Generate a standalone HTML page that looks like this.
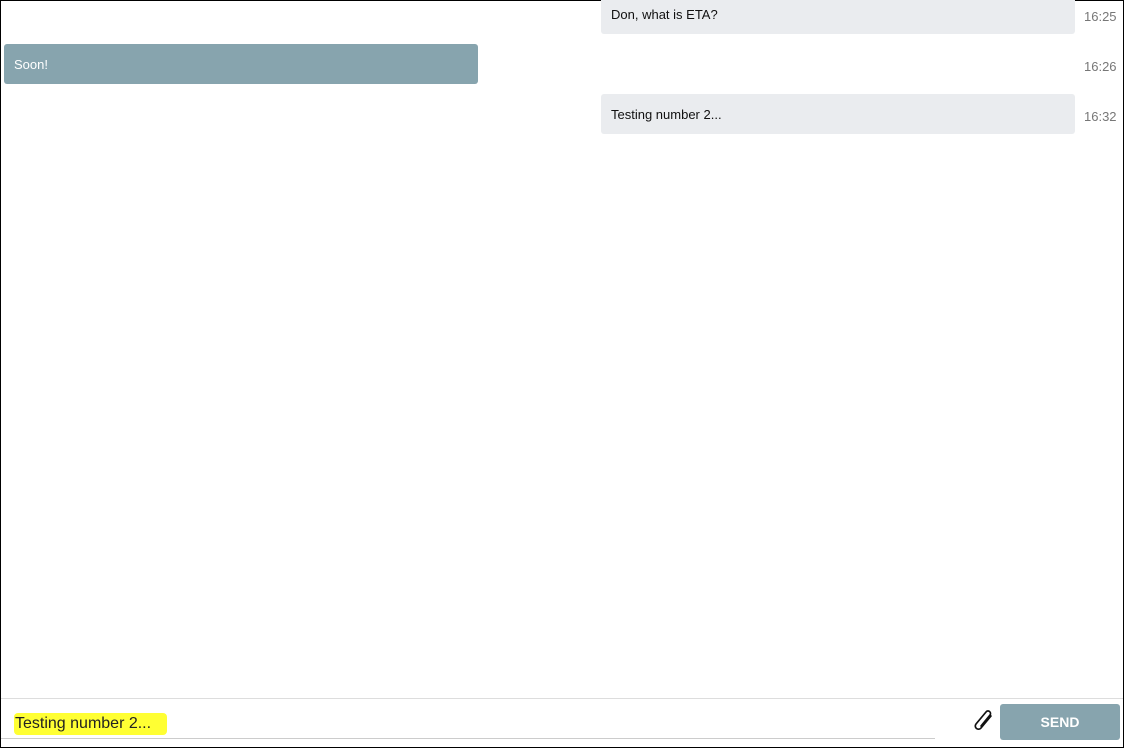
<!DOCTYPE html>
<html><head><style>
body{margin:0;width:1124px;height:748px;overflow:hidden;font-family:"Liberation Sans",Arial,sans-serif;background:#fff}
.frame{position:absolute;left:0;top:0;width:1122px;height:746px;border:1px solid #000}
.b{position:absolute;border-radius:3px;font-size:13px;padding-left:10px;box-sizing:border-box;line-height:41px}
.r{left:601px;width:474px;background:#eaecef;color:#111}
.l{left:4px;width:474px;background:#87a4ae;color:#fff}
.t{position:absolute;left:1084px;font-size:13px;color:#777}
</style></head><body>
<div class="frame"></div>
<div class="b r" style="top:-6px;height:40px">Don, what is ETA?</div>
<div class="t" style="top:9px">16:25</div>
<div class="b l" style="top:44px;height:40px">Soon!</div>
<div class="t" style="top:59px">16:26</div>
<div class="b r" style="top:94px;height:40px">Testing number 2...</div>
<div class="t" style="top:109px">16:32</div>
<div style="position:absolute;left:1px;top:698px;width:1122px;height:1px;background:#ddd"></div>
<div style="position:absolute;left:1px;top:738px;width:934px;height:1px;background:#ccc"></div>
<div style="position:absolute;left:14px;top:713px;width:153px;height:22px;background:#ffff33;border-radius:4px"></div>
<div style="position:absolute;left:15px;top:715px;font-size:16px;color:#222">Testing number 2...</div>
<svg style="position:absolute;left:972px;top:709px" width="24" height="26" viewBox="0 0 24 26"><path d="M19 7 L9 19 a3.2 3.2 0 0 1 -5 -4 L14 3 a2.4 2.4 0 0 1 4 3 L9 17" fill="none" stroke="#111" stroke-width="1.7" stroke-linecap="round"/></svg>
<div style="position:absolute;left:1000px;top:704px;width:120px;height:36px;background:#87a4ae;border-radius:3px;color:#fff;font-weight:bold;font-size:14px;text-align:center;line-height:36px">SEND</div>
</body></html>
